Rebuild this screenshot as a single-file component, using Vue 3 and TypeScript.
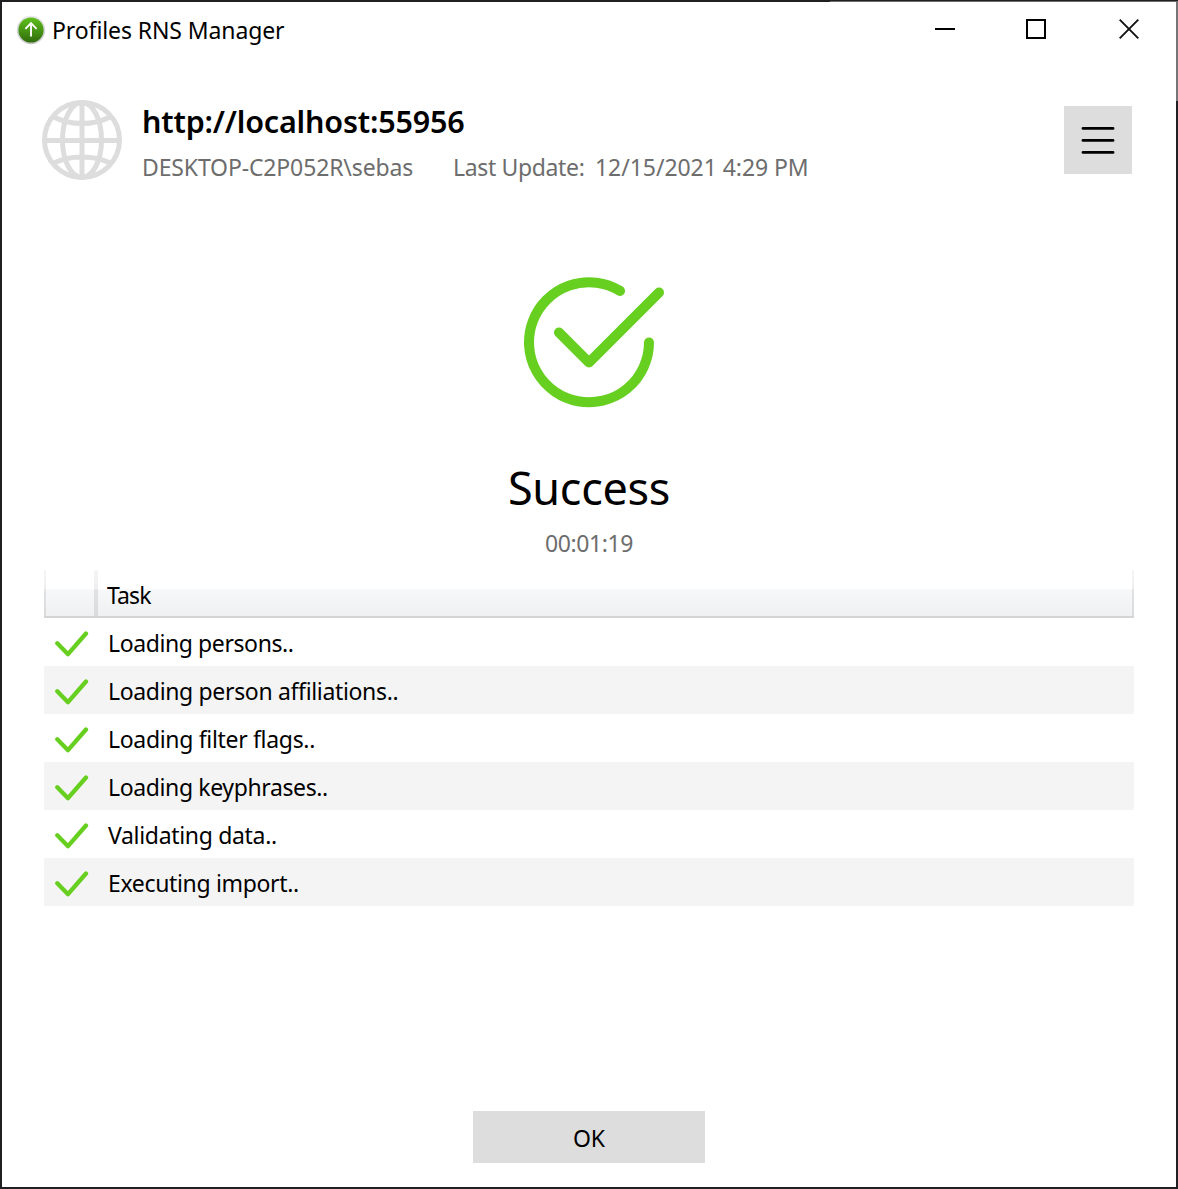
<script setup lang="ts">
interface Task {
  label: string
  spacing: string
}

const tasks: Task[] = [
  { label: 'Loading persons..', spacing: '-0.4px' },
  { label: 'Loading person affiliations..', spacing: '-0.34px' },
  { label: 'Loading filter flags..', spacing: '-0.32px' },
  { label: 'Loading keyphrases..', spacing: '-0.38px' },
  { label: 'Validating data..', spacing: '-0.32px' },
  { label: 'Executing import..', spacing: '-0.34px' },
]
</script>

<template>
  <div class="window">
    <header class="titlebar">
      <svg class="app-icon" width="30" height="30" viewBox="0 0 30 30">
        <defs>
          <linearGradient id="badge" x1="0" y1="0" x2="0" y2="1">
            <stop offset="0" stop-color="#5fc01c" />
            <stop offset="1" stop-color="#306c0c" />
          </linearGradient>
          <linearGradient id="rim" x1="0" y1="0" x2="0" y2="1">
            <stop offset="0" stop-color="#e9e9ec" />
            <stop offset="1" stop-color="#c4c4c6" />
          </linearGradient>
        </defs>
        <circle cx="15" cy="15" r="14.2" fill="url(#rim)" />
        <circle cx="15" cy="15" r="12.6" fill="url(#badge)" />
        <path d="M15 21.5V8.5M9.4 13.8L15 8.2l5.6 5.6" fill="none" stroke="#fff" stroke-width="1.9" />
      </svg>
      <span class="title">Profiles RNS Manager</span>
      <div class="controls">
        <svg width="20" height="20" viewBox="0 0 20 20"><path d="M0 10H20" stroke="#000" stroke-width="2" /></svg>
        <svg width="20" height="20" viewBox="0 0 20 20"><rect x="1" y="1" width="18" height="18" fill="none" stroke="#000" stroke-width="2" /></svg>
        <svg width="20" height="20" viewBox="0 0 20 20"><path d="M.7 .7L19.3 19.3M19.3 .7L.7 19.3" stroke="#111" stroke-width="1.9" /></svg>
      </div>
    </header>

    <section class="connection">
      <svg class="globe" width="80" height="80" viewBox="0 0 80 80" fill="none" stroke="#ddd" stroke-width="5">
        <circle cx="40" cy="40" r="37.5" />
        <ellipse cx="40" cy="40" rx="19.5" ry="37.5" />
        <path d="M40 2V78M2 40.5H78M12 17Q24 23.5 40 23.5T68 17M12 63Q24 57 40 57T68 63" />
      </svg>
      <div class="details">
        <div class="host">http://localhost:55956</div>
        <div class="meta">
          <span class="machine">DESKTOP-C2P052R\sebas</span>
          <span class="update">Last Update:</span>
          <span class="date">12/15/2021 4:29 PM</span>
        </div>
      </div>
      <button class="menu" aria-label="Menu">
        <svg width="68" height="68" viewBox="0 0 68 68">
          <path d="M19 22.4H49M19 34.4H49M19 46.4H49" stroke="#000" stroke-width="2.9" stroke-linecap="round" />
        </svg>
      </button>
    </section>

    <section class="result">
      <svg width="142" height="132" viewBox="0 0 142 132" fill="none" stroke="#66cf20" stroke-width="10" stroke-linecap="round" stroke-linejoin="round">
        <path d="M126 65.5A60 60 0 1 1 97 13.9M36 55.5L66 85.5L136 15.5" />
      </svg>
      <h1>Success</h1>
      <div class="elapsed">00:01:19</div>
    </section>

    <section class="table">
      <div class="thead">
        <div class="th status"></div>
        <div class="th name"><span>Task</span></div>
      </div>
      <div v-for="task in tasks" :key="task.label" class="row">
        <svg width="36" height="30" viewBox="0 0 36 30" fill="none" stroke="#66cf20" stroke-width="4.3" stroke-linecap="round" stroke-linejoin="round">
          <path d="M3.3 16.3L14 27.2L32 6.5" />
        </svg>
        <span :style="{ letterSpacing: task.spacing }">{{ task.label }}</span>
      </div>
    </section>

    <footer class="footer">
      <button class="ok">OK</button>
    </footer>
  </div>
</template>

<style>
body {
  margin: 0;
}
</style>

<style scoped>
.window {
  box-sizing: border-box;
  width: 1178px;
  height: 1189px;
  padding: 2px;
  display: flex;
  flex-direction: column;
  overflow: hidden;
  background:
    linear-gradient(#fff, #fff) 2px 2px / 1174px 1185px no-repeat,
    linear-gradient(#6b6b6b, #6b6b6b) 830px 1px / 348px 1px no-repeat,
    linear-gradient(#757575, #757575) 1176px 2px / 2px 99px no-repeat,
    #202022;
  font-family: "Noto Sans", "Open Sans", sans-serif;
  font-size: 23px;
  color: #000;
}

button {
  border: 0;
  padding: 0;
  font: inherit;
  color: inherit;
  background: #ddd;
}

svg {
  display: block;
  flex: none;
}

span,
.host,
h1,
.elapsed {
  white-space: nowrap;
}

.titlebar {
  display: flex;
  align-items: center;
  height: 54px;
  padding: 0 37px 0 14px;
}

.app-icon {
  margin-top: 2px;
}

.title {
  margin: 2px 0 0 6px;
  letter-spacing: -0.1px;
}

.controls {
  display: flex;
  gap: 72px;
  margin-left: auto;
}

.controls svg:first-child {
  margin-right: -1px;
}

.controls svg:last-child {
  margin-left: 1px;
}

.connection {
  display: flex;
  align-items: flex-start;
  height: 80px;
  margin-top: 44px;
  padding: 0 44px 0 40px;
}

.details {
  margin-left: 20px;
}

.host {
  height: 44px;
  line-height: 42px;
  font-size: 30.5px;
  font-weight: 600;
  letter-spacing: -0.19px;
}

.meta {
  display: flex;
  height: 48px;
  line-height: 46px;
  color: #6d6d6d;
}

.machine {
  width: 311px;
  letter-spacing: -0.14px;
}

.update {
  width: 142px;
  letter-spacing: -0.35px;
}

.date {
  letter-spacing: -0.06px;
}

.menu {
  width: 68px;
  height: 68px;
  margin: 6px 0 0 auto;
}

.result {
  display: flex;
  flex-direction: column;
  align-items: center;
  height: 293px;
  margin-top: 97px;
}

.result svg {
  margin-left: 10px;
}

h1 {
  margin: 45px 0 0;
  height: 68px;
  line-height: 67px;
  font-size: 45px;
  font-weight: 400;
  letter-spacing: -0.3px;
}

.elapsed {
  height: 44px;
  line-height: 42px;
  color: #6d6d6d;
  letter-spacing: -0.4px;
}

.table {
  width: 1090px;
  margin-left: 42px;
}

.thead {
  box-sizing: border-box;
  display: flex;
  height: 48px;
  border-bottom: 2px solid #d5d5d5;
  background: linear-gradient(#fff 0 19px, #f7f8fa 19px, #eff0f2 46px);
}

.th {
  box-sizing: border-box;
  border: 0 solid;
  border-image: linear-gradient(#f5f5f5, #eee 19px, #e0e1e3 20px, #dbdbdc) 1;
}

.status {
  width: 54px;
  border-width: 0 4px 0 2px;
}

.name {
  flex: 1;
  padding-left: 9px;
  line-height: 51px;
  letter-spacing: -0.9px;
  border-width: 0 2px 0 0;
}

.row {
  display: flex;
  align-items: center;
  height: 48px;
  padding-left: 10px;
}

.row:nth-child(odd) {
  background: #f4f4f4;
}

.row span {
  margin: 1px 0 0 18px;
}

.footer {
  display: flex;
  justify-content: center;
  margin: auto 0 24px;
}

.ok {
  width: 232px;
  height: 52px;
  padding-top: 1px;
}
</style>
